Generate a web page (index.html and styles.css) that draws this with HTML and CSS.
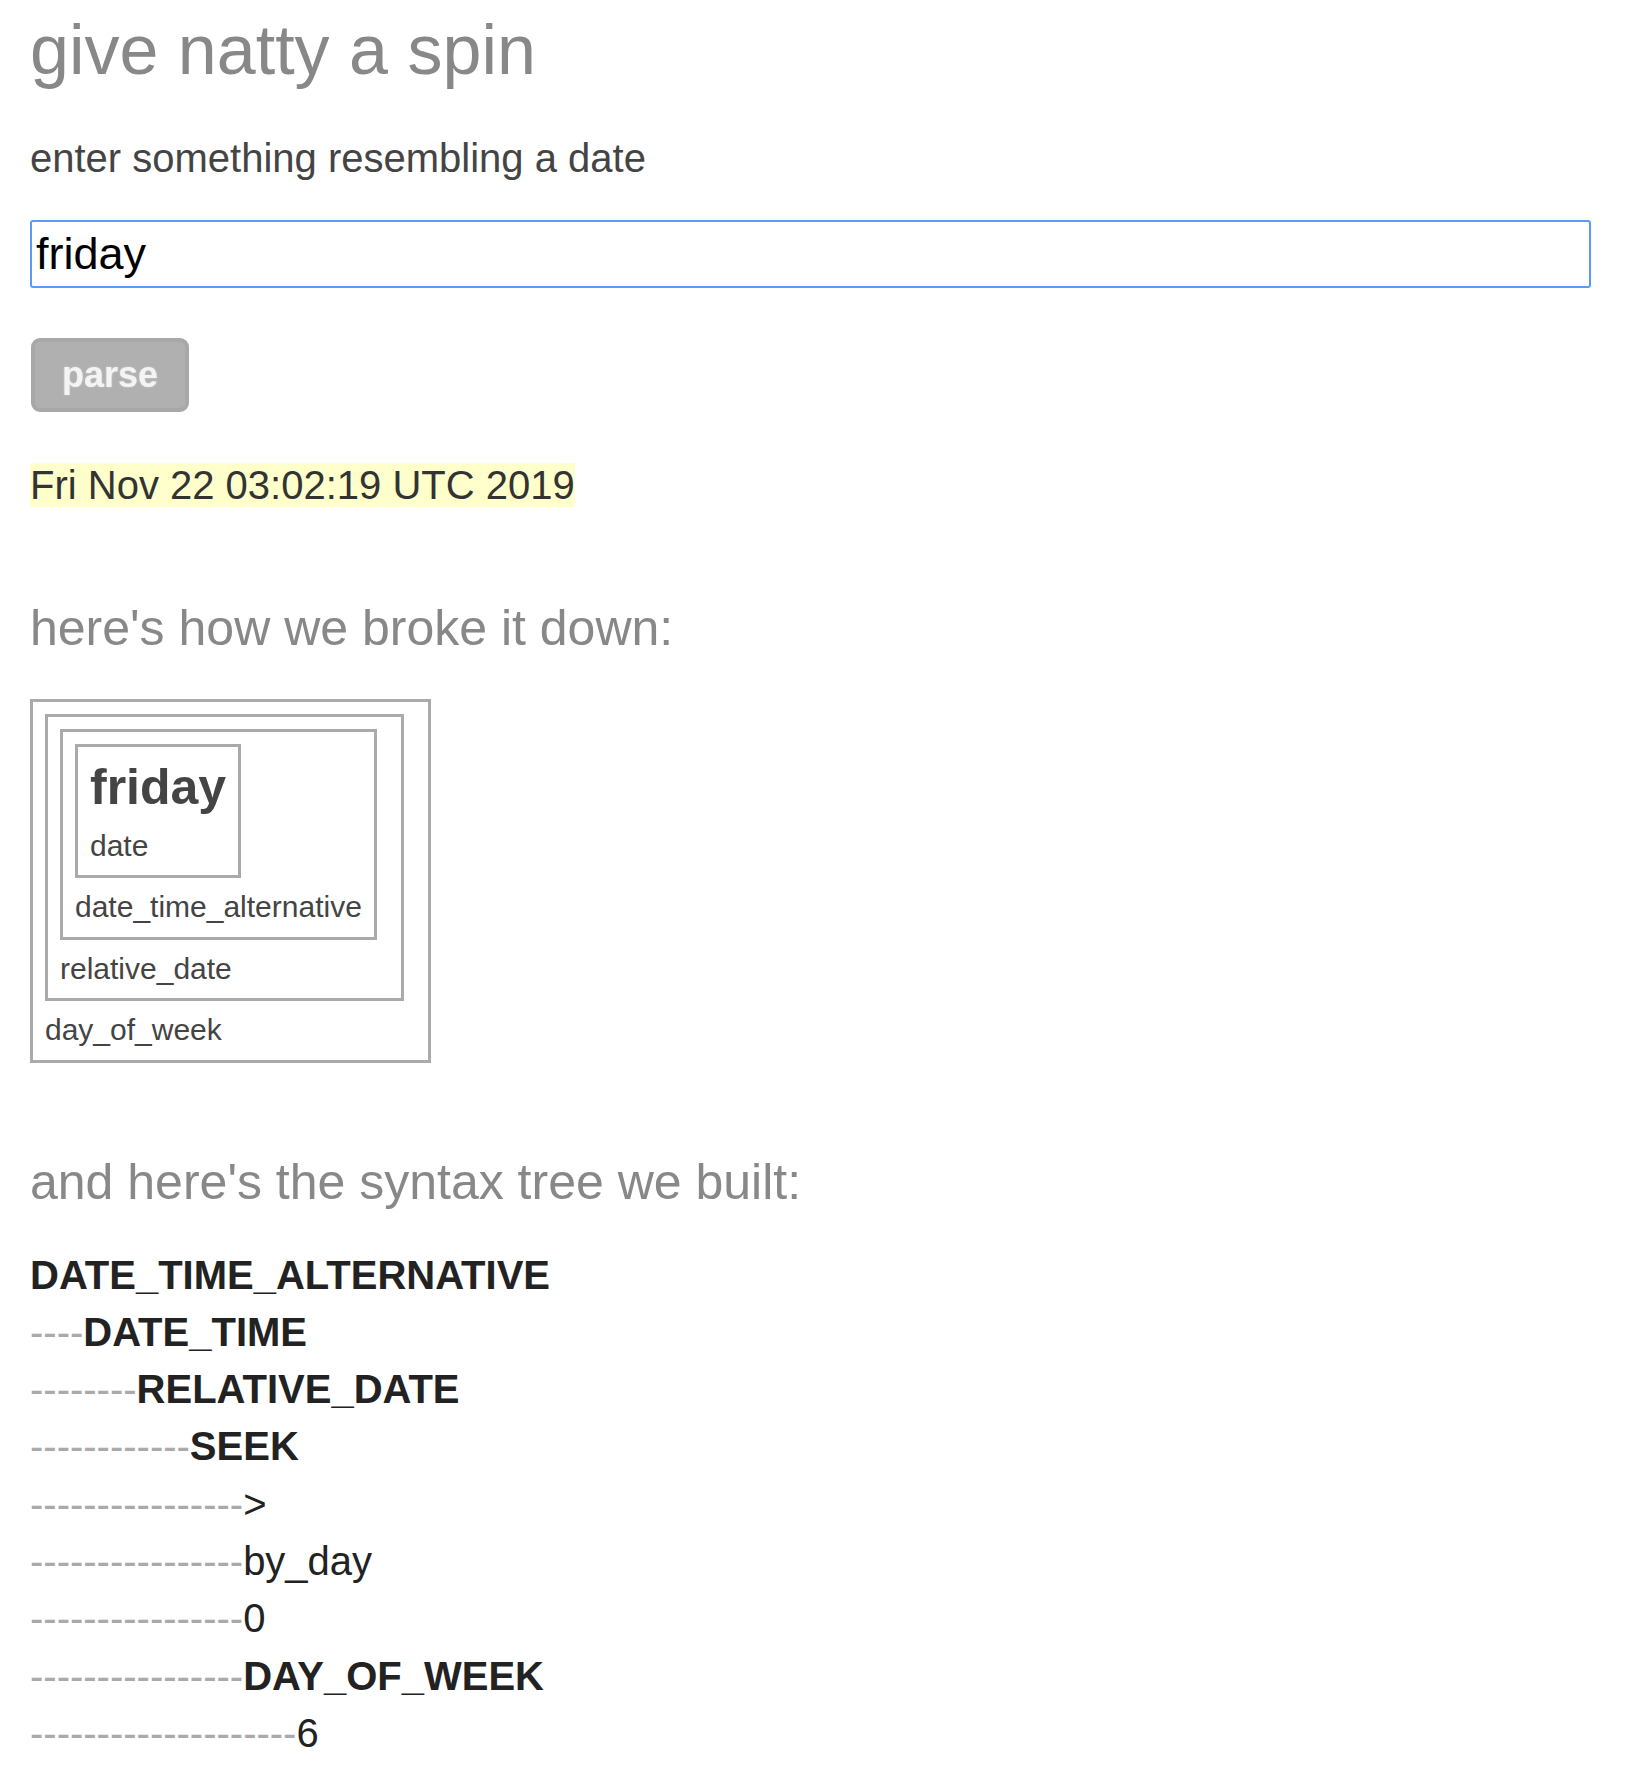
FILE: index.html
```html
<!DOCTYPE html>
<html lang="en">
<head>
<meta charset="utf-8">
<title>give natty a spin</title>
<link rel="stylesheet" href="styles.css">
</head>
<body>
<main class="page">
  <h1 class="title">give natty a spin</h1>
  <p class="prompt">enter something resembling a date</p>
  <input class="date-input" type="text" value="friday">
  <button class="parse" type="button">parse</button>
  <p class="result"><span class="result-text">Fri Nov 22 03:02:19 UTC 2019</span></p>

  <h2 class="section">here's how we broke it down:</h2>
  <div class="breakdown">
    <div class="box">
      <div class="box">
        <div class="box">
          <div class="box">
            <span class="token">friday</span>
            <span class="label">date</span>
          </div>
          <span class="label">date_time_alternative</span>
        </div>
        <span class="label">relative_date</span>
      </div>
      <span class="label">day_of_week</span>
    </div>
  </div>

  <h2 class="section section-tree">and here's the syntax tree we built:</h2>
  <div class="tree">
    <div class="node"><b class="nt">DATE_TIME_ALTERNATIVE</b></div>
    <div class="node"><span class="dash">----</span><b class="nt">DATE_TIME</b></div>
    <div class="node"><span class="dash">--------</span><b class="nt">RELATIVE_DATE</b></div>
    <div class="node"><span class="dash">------------</span><b class="nt">SEEK</b></div>
    <div class="node"><span class="dash">----------------</span><span class="term">&gt;</span></div>
    <div class="node"><span class="dash">----------------</span><span class="term">by_day</span></div>
    <div class="node"><span class="dash">----------------</span><span class="term">0</span></div>
    <div class="node"><span class="dash">----------------</span><b class="nt">DAY_OF_WEEK</b></div>
    <div class="node"><span class="dash">--------------------</span><span class="term">6</span></div>
  </div>
</main>
</body>
</html>
```
FILE: styles.css
```css
html, body {
  margin: 0;
  padding: 0;
  background: #ffffff;
}

body {
  font-family: "Liberation Sans", Arial, sans-serif;
  color: #444444;
}

.page {
  display: flex;
  flex-direction: column;
  align-items: flex-start;
  padding: 10px 0 0 30px;
}

.title {
  margin: 0;
  font-size: 70px;
  font-weight: normal;
  color: #888888;
  line-height: 80px;
}

.prompt {
  margin: 45px 0 0 0;
  font-size: 40px;
  line-height: 46px;
  color: #444444;
}

.date-input {
  box-sizing: border-box;
  margin: 39px 0 0 0;
  width: 1561px;
  height: 68px;
  padding: 0 4px;
  border: 2px solid #5b9bf8;
  border-radius: 3px;
  outline: none;
  font-family: "Liberation Sans", Arial, sans-serif;
  font-size: 45px;
  color: #000000;
  background: #ffffff;
}

.parse {
  box-sizing: border-box;
  margin: 50px 0 0 1px;
  width: 158px;
  height: 74px;
  padding: 0;
  border: 4px solid #a8a8a8;
  border-radius: 9px;
  background: #b0b0b0;
  color: #f4f4f4;
  font-family: "Liberation Sans", Arial, sans-serif;
  font-weight: bold;
  font-size: 36px;
  text-shadow: 0 0 2px rgba(255, 255, 255, 0.5);
  filter: blur(0.6px);
}

.result {
  margin: 50px 0 0 0;
  font-size: 40px;
  line-height: 46px;
}

.result-text {
  background: #ffffcc;
  color: #333333;
}

.section {
  margin: 92px 0 0 0;
  font-size: 50px;
  font-weight: normal;
  line-height: 57px;
  color: #888888;
}

.breakdown {
  margin-top: 42px;
  display: flex;
}

.box {
  display: flex;
  flex-direction: column;
  align-items: flex-start;
  border: 3px solid #aaaaaa;
  padding: 12px;
}

.box > .box {
  margin: 0 12px 12px 0;
}

.token {
  font-size: 50px;
  font-weight: bold;
  line-height: 57.5px;
  color: #444444;
  margin-bottom: 12px;
}

.label {
  font-size: 30px;
  line-height: 34.5px;
  color: #444444;
}

.section-tree {
  margin-top: 91px;
}

.tree {
  margin-top: 36px;
  font-size: 40px;
  line-height: 57.3px;
  color: #222222;
}

.node {
  white-space: nowrap;
}

.dash {
  color: #aaaaaa;
  font-weight: normal;
}

.nt {
  font-weight: bold;
}

.term {
  font-weight: normal;
}
```
